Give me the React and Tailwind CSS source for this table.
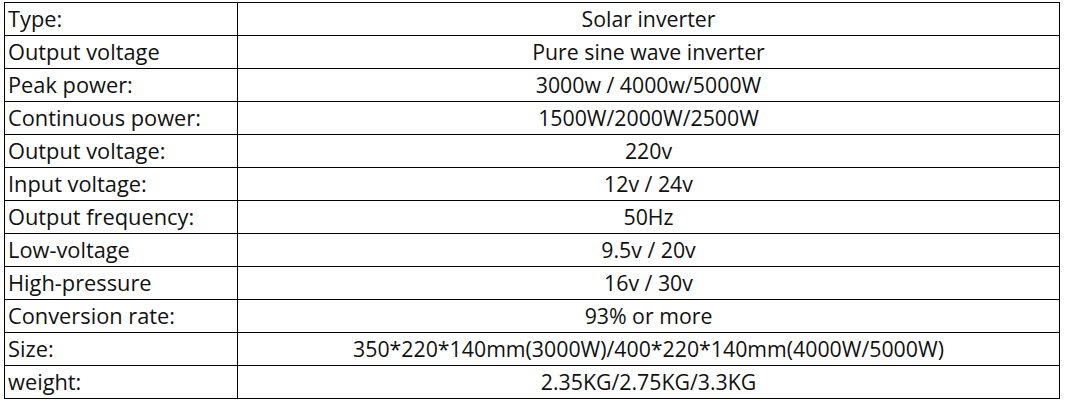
import React from "react";

const specs = [
  ["Type:", "Solar inverter"],
  ["Output voltage", "Pure sine wave inverter"],
  ["Peak power:", "3000w / 4000w/5000W"],
  ["Continuous power:", "1500W/2000W/2500W"],
  ["Output voltage:", "220v"],
  ["Input voltage:", "12v / 24v"],
  ["Output frequency:", "50Hz"],
  ["Low-voltage", "9.5v / 20v"],
  ["High-pressure", "16v / 30v"],
  ["Conversion rate:", "93% or more"],
  ["Size:", "350*220*140mm(3000W)/400*220*140mm(4000W/5000W)"],
  ["weight:", "2.35KG/2.75KG/3.3KG"],
];

function App() {
  return (
    <div
      className="w-[1069px] h-[403px] bg-white pt-[2px] pl-[4px] text-[#111] overflow-hidden"
      style={{ fontFamily: '"Open Sans", "Noto Sans", sans-serif' }}
    >
      <div className="grid grid-cols-[233px_822px] w-[1056px] border-l border-t border-black">
        {specs.map(([label, value], i) => (
          <React.Fragment key={i}>
            <div className="h-[33px] border-r border-b border-black pl-[3px] flex items-center text-[21.8px] leading-none whitespace-nowrap">
              {label}
            </div>
            <div className="h-[33px] border-r border-b border-black flex items-center justify-center text-[21.3px] leading-none whitespace-nowrap">
              {value}
            </div>
          </React.Fragment>
        ))}
      </div>
    </div>
  );
}

export default App;
